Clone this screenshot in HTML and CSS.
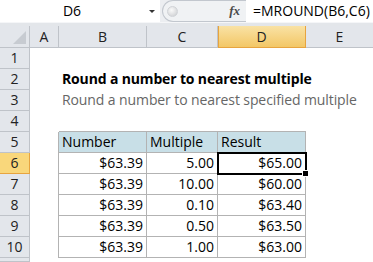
FILE: index.html
```html
<!DOCTYPE html>
<html lang="en">
<head>
    <meta charset="UTF-8">
    <title>MROUND</title>
    <link rel="stylesheet" href="styles.css">
</head>
<body>

<div class="formula-bar">
    <div class="name-box">D6<span class="arrow"></span></div>
    <div class="pill">
        <span class="knob"></span>
        <span class="fx">fx</span>
    </div>
    <div class="formula">=MROUND(B6,C6)</div>
</div>
<div class="splitter"></div>

<div class="sheet">
    <div class="corner"></div>
    <div class="ch">A</div>
    <div class="ch">B</div>
    <div class="ch">C</div>
    <div class="ch active">D</div>
    <div class="ch last">E</div>

    <div class="rh">1</div><div></div><div></div><div></div><div></div><div></div>

    <div class="rh">2</div><div></div>
    <div class="cell title">Round a number to nearest multiple</div><div></div><div></div><div></div>

    <div class="rh">3</div><div></div>
    <div class="cell sub">Round a number to nearest specified multiple</div><div></div><div></div><div></div>

    <div class="rh">4</div><div></div>
    <div class="tt"></div><div class="tt"></div><div class="tt"></div><div></div>

    <div class="rh">5</div><div class="tl"></div>
    <div class="cell t head">Number</div>
    <div class="cell t head">Multiple</div>
    <div class="cell t head">Result</div><div></div>

    <div class="rh active">6</div><div class="tl"></div>
    <div class="cell t num">$63.39</div>
    <div class="cell t num">5.00</div>
    <div class="cell t num selected">$65.00</div><div></div>

    <div class="rh">7</div><div class="tl"></div>
    <div class="cell t num">$63.39</div>
    <div class="cell t num">10.00</div>
    <div class="cell t num">$60.00</div><div></div>

    <div class="rh">8</div><div class="tl"></div>
    <div class="cell t num">$63.39</div>
    <div class="cell t num">0.10</div>
    <div class="cell t num">$63.40</div><div></div>

    <div class="rh">9</div><div class="tl"></div>
    <div class="cell t num">$63.39</div>
    <div class="cell t num">0.50</div>
    <div class="cell t num">$63.50</div><div></div>

    <div class="rh">10</div><div class="tl"></div>
    <div class="cell t num">$63.39</div>
    <div class="cell t num">1.00</div>
    <div class="cell t num">$63.00</div><div></div>

    <div class="rh"></div><div></div><div></div><div></div><div></div><div></div>
</div>

</body>
</html>
```

FILE: styles.css
```css
body {
    margin: 0;
    padding: 0;
    width: 373px;
    height: 262px;
    overflow: hidden;
    background-color: #fff;
    font-family: "Open Sans", "Noto Sans", sans-serif;
    font-size: 14px;
    color: #000;
}

.formula-bar {
    display: flex;
    height: 22px;
    background-color: #eceef1;
}

.name-box {
    position: relative;
    width: 160px;
    background-color: #fff;
    text-align: center;
    line-height: 22px;
    padding-right: 16px;
    box-sizing: border-box;
}

.arrow {
    position: absolute;
    right: 5px;
    top: 10px;
    border-left: 3px solid transparent;
    border-right: 3px solid transparent;
    border-top: 3px solid #333;
}

.pill {
    display: flex;
    align-items: center;
    width: 84px;
    margin-left: 2px;
    border: 1px solid #c2c7ce;
    border-right: none;
    border-radius: 11px 0 0 11px;
    background-color: #f0f2f4;
    box-sizing: border-box;
}

.knob {
    width: 9px;
    height: 9px;
    margin-left: 4px;
    border-radius: 50%;
    background: radial-gradient(circle at 40% 35%, #fafafa, #c9cbce);
    border: 1px solid #d0d3d7;
}

.fx {
    margin-left: auto;
    margin-right: 6px;
    font-family: "Liberation Serif", serif;
    font-style: italic;
    font-weight: bold;
    font-size: 13px;
    color: #4a4a4a;
}

.formula {
    flex: 1;
    background-color: #fff;
    line-height: 22px;
    padding-left: 7px;
    white-space: nowrap;
}

.splitter {
    height: 4px;
    background-color: #e3e6ea;
    border-top: 1px solid #f5f6f8;
    box-sizing: border-box;
}

.sheet {
    display: grid;
    grid-template-columns: 30px 29px 88px 71px 88px 1fr;
    grid-template-rows: 22px repeat(10, 21px) 4px;
    background-color: #fff;
}

.sheet > div {
    box-sizing: border-box;
    min-width: 0;
}

.corner,
.ch,
.rh {
    background-color: #e3e6eb;
    border-right: 1px solid #bfc3c9;
    border-bottom: 1px solid #bfc3c9;
    color: #222;
    text-align: center;
}

.corner {
    position: relative;
}

.corner::after {
    content: "";
    position: absolute;
    right: 3px;
    bottom: 3px;
    border-left: 13px solid transparent;
    border-bottom: 13px solid #c7cbd1;
}

.ch {
    line-height: 21px;
}

.ch.last {
    border-right: none;
}

.rh {
    line-height: 20px;
}

.ch.active {
    background: linear-gradient(#f9e2a5, #f3c766);
    border-right-color: #e7a43f;
    border-bottom-color: #e7a43f;
    box-shadow: inset 1px 0 0 #e7a43f;
}

.rh.active {
    background-color: #f9d77b;
    border-bottom-color: #e7a43f;
    border-right-color: #e7a43f;
}

.cell {
    line-height: 20px;
    white-space: nowrap;
    padding: 0 3px;
}

.title {
    font-weight: bold;
    letter-spacing: -0.15px;
    overflow: visible;
}

.sub {
    color: #666;
    letter-spacing: -0.1px;
    overflow: visible;
}

.t {
    border-right: 1px solid #b3b3b3;
    border-bottom: 1px solid #b3b3b3;
    overflow: hidden;
}

.tl {
    border-right: 1px solid #b3b3b3;
}

.tt {
    border-bottom: 1px solid #b3b3b3;
}

.head {
    background-color: #c8dfe7;
}

.num {
    text-align: right;
}

.selected {
    position: relative;
    overflow: visible;
    outline: 2px solid #000;
    outline-offset: -1px;
}

.selected::after {
    content: "";
    position: absolute;
    right: -4px;
    bottom: -4px;
    width: 5px;
    height: 5px;
    background-color: #000;
    border: 1px solid #fff;
}
```
